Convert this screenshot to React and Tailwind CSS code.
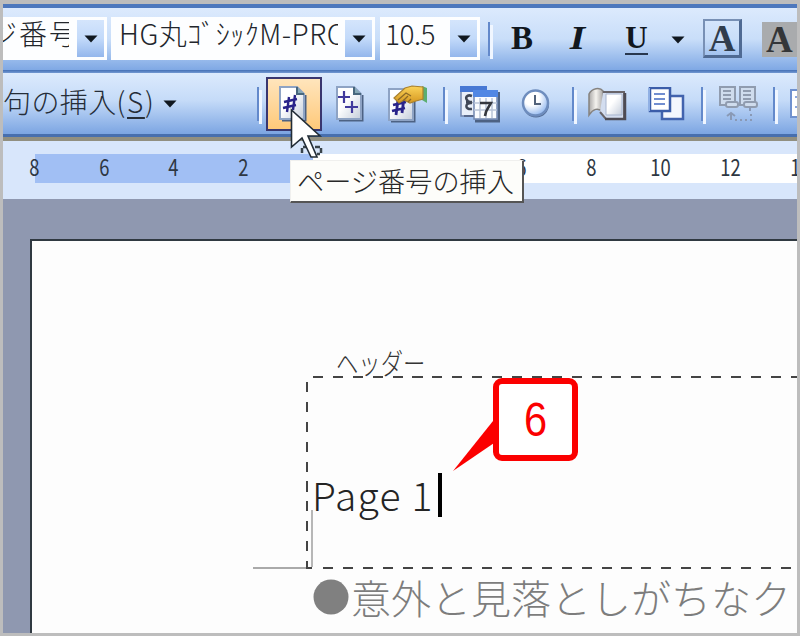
const fontStack = "font-['Noto_Sans_CJK_JP','Liberation_Sans',sans-serif]";

const rulerMarks = ["8", "6", "4", "2", "", "", "", "6", "8", "10", "12", "14"];

function Arrow() {
  return (
    <svg width="14" height="8" viewBox="0 0 14 8" className="shrink-0">
      <path d="M0.5 0.5H13.5L7 7.5Z" fill="#101820" />
    </svg>
  );
}

function Separator({ className }) {
  return (
    <div className={`flex h-[37px] w-[5px] shrink-0 ${className}`}>
      <div className="mb-[3px] w-[2px] bg-[#6389cb]" />
      <div className="mt-[3px] w-[3px] bg-[#f0f6ff]" />
    </div>
  );
}

function Combo({ text, className, textClass }) {
  return (
    <div className={`mt-[9px] flex h-[43px] shrink-0 items-start bg-[#fdfeff] ${className}`}>
      <div className={`h-[40px] flex-1 overflow-hidden whitespace-nowrap text-[28px] leading-[32px] text-[#22262c] ${textClass}`}>
        {text}
      </div>
      <div className="mt-[3px] mr-[3px] flex h-[37px] w-[27px] shrink-0 items-center justify-center bg-linear-to-b from-[#d4e5fc] via-[#c3dafa] to-[#94b7ec]">
        <Arrow />
      </div>
    </div>
  );
}

function Sheet() {
  return (
    <>
      <path d="M3 34H26V9" fill="none" stroke="#4d6283" strokeWidth="3" />
      <path d="M1 1H18L25 8V33H1Z" fill="url(#sheet)" stroke="#8ea3c4" strokeWidth="2" />
      <path d="M18 1V8H25" fill="#86a9b5" stroke="#48677d" strokeWidth="2" />
    </>
  );
}

function Defs() {
  return (
    <defs>
      <linearGradient id="sheet" x1="0" y1="0" x2="1" y2="1">
        <stop offset=".4" stopColor="#fff" />
        <stop offset="1" stopColor="#c4cddb" />
      </linearGradient>
      <linearGradient id="gold" x1="0" y1="0" x2="0" y2="1">
        <stop offset="0" stopColor="#fbd35a" />
        <stop offset="1" stopColor="#d69820" />
      </linearGradient>
      <radialGradient id="face" cx=".35" cy=".3" r=".75">
        <stop offset=".4" stopColor="#fff" />
        <stop offset="1" stopColor="#8fb6ef" />
      </radialGradient>
      <linearGradient id="leaf">
        <stop offset="0" stopColor="#aaa8a7" />
        <stop offset=".5" stopColor="#f5f3ef" />
        <stop offset="1" stopColor="#aaa8a7" />
      </linearGradient>
    </defs>
  );
}

const hashPath = "M10 11L8 26M16 9L14 24M5 16L18 13M4 22L17 19";

function PageNumberIcon() {
  return (
    <svg width="28" height="36" viewBox="0 0 28 36" className="-ml-[3px]">
      <Defs />
      <Sheet />
      <path d={hashPath} fill="none" stroke="#29238a" strokeWidth="2.4" />
    </svg>
  );
}

function PageCountIcon() {
  return (
    <svg width="28" height="36" viewBox="0 0 28 36" className="ml-[14px] shrink-0">
      <Sheet />
      <path d="M8 5V17M2 11H14M16 15V27M9 21H22" fill="none" stroke="#423b9d" strokeWidth="2.2" />
    </svg>
  );
}

function PageFormatIcon() {
  return (
    <svg width="41" height="38" viewBox="0 0 41 38" className="ml-6 shrink-0">
      <path d="M3 36H26V12" fill="none" stroke="#4d6283" strokeWidth="3" />
      <path d="M1 4H25V35H1Z" fill="url(#sheet)" stroke="#8ea3c4" strokeWidth="2" />
      <path d={hashPath} transform="translate(0 4)" fill="none" stroke="#29238a" strokeWidth="2.8" />
      <path d="M34 1L39 3V18L34 15Z" fill="#5bae71" />
      <path d="M6 13L17 3L24 1L35 2V14L28 16L22 18L16 15L11 18Z" fill="url(#gold)" stroke="#a9812f" strokeWidth="1.2" />
      <path d="M10 15L18 8L23 11M15 16L20 11M20 17L23 14" fill="none" stroke="#8b6826" strokeWidth="1.3" />
    </svg>
  );
}

function CalendarIcon() {
  return (
    <svg width="40" height="38" viewBox="0 0 40 38" className="ml-[12px] shrink-0">
      <path d="M1 2H26V31H1Z" fill="#e9eff9" stroke="#7187b0" strokeWidth="1.5" />
      <path d="M0 1H27V7H0Z" fill="#4778d4" />
      <path d="M12 11C7 9 4 13 8 16L12 18C5 17 4 25 12 24M6 17H12" fill="none" stroke="#3f4655" strokeWidth="2.5" />
      <path d="M4 31H15" stroke="#59698b" strokeWidth="2" />
      <path d="M15 36H39V7" fill="none" stroke="#4d6283" strokeWidth="3" />
      <path d="M14 6H37V34H14Z" fill="#fafcff" stroke="#7187b0" strokeWidth="1.5" />
      <path d="M13 5H38V12H13Z" fill="#5187e4" />
      <path d="M20 13V33M26 13V33M32 13V33M14 18H37M14 25H37" stroke="#b9c4d8" strokeWidth="1.5" />
      <path d="M20 18H31C29 22 26 24 25 31" fill="none" stroke="#34373e" strokeWidth="2.6" />
    </svg>
  );
}

function ClockIcon() {
  return (
    <svg width="30" height="32" viewBox="0 0 30 32" className="ml-[21px] shrink-0">
      <circle cx="15" cy="16.5" r="13" fill="#536a91" />
      <circle cx="14.5" cy="15" r="12.5" fill="url(#face)" stroke="#6e8dbe" strokeWidth="2.5" />
      <path d="M14 7V16H20" fill="none" stroke="#53637b" strokeWidth="2" />
    </svg>
  );
}

function BookIcon() {
  return (
    <svg width="39" height="34" viewBox="0 0 39 34" className="ml-[11px] shrink-0">
      <path d="M1 28V7C4 1 12 0 15 4V25C10 20 5 22 1 28Z" fill="url(#leaf)" stroke="#85827f" strokeWidth="1.5" />
      <path d="M15 5H36V32H18L12 25" fill="#d3ddef" stroke="#69656a" strokeWidth="2" />
      <path d="M18 7H34V28H18Z" fill="url(#sheet)" stroke="#a7b4ce" />
      <path d="M37 6V32H17" fill="none" stroke="#4d4b54" strokeWidth="2.5" />
    </svg>
  );
}

function CopyHeaderIcon() {
  return (
    <svg width="37" height="34" viewBox="0 0 37 34" className="ml-[21px] shrink-0">
      <path d="M14 9H35V32H14Z" fill="#f4f7fe" stroke="#4263ae" strokeWidth="2.5" />
      <path d="M2 1H22V24H2Z" fill="#fff" stroke="#3b5da9" strokeWidth="2.5" />
      <path d="M1 1V24" stroke="#90b0e4" strokeWidth="2" />
      <path d="M6 7H17M6 12H17M6 17H17" stroke="#718ed0" strokeWidth="2" />
    </svg>
  );
}

function LinkPreviousIcon() {
  return (
    <svg width="41" height="38" viewBox="0 0 41 38" className="ml-[12px] shrink-0">
      <g fill="#cfdced" stroke="#909caf" strokeWidth="2">
        <path d="M2 2H17V20H2ZM22 2H37V20H22Z" />
        <path d="M5 6H13M5 10H13M5 14H13M25 6H33M25 10H33M25 14H33" />
        <rect x="8" y="17" width="12" height="5" rx="2" />
        <rect x="26" y="17" width="13" height="5" rx="2" />
      </g>
      <path d="M9 31L13 28L17 31M13 28V35M32 22V26" fill="none" stroke="#8999b5" strokeWidth="2" />
      <path d="M17 35H33V28" fill="none" stroke="#8999b5" strokeWidth="2" strokeDasharray="2 3" />
    </svg>
  );
}

function FormattingToolbar() {
  return (
    <div className="flex h-[62px] shrink-0 overflow-hidden bg-linear-to-b from-[#dceafd] via-[#c9def9] via-50% to-[#7fa8e4]">
      <Combo text="ジ番号" className="w-[104px]" textClass="mr-[8px] -indent-[14px] tracking-[2px]" />
      <Combo text="HG丸ｺﾞｼｯｸM-PRO" className="ml-1 w-[264px]" textClass="mr-[7px] pl-[8px] tracking-[0.5px]" />
      <Combo text="10.5" className="ml-[5px] w-[100px]" textClass="pl-[5px] tracking-[-0.5px]" />
      <Separator className="mt-[14px] ml-[8px]" />
      <div className="mt-[11px] flex h-[39px] items-center font-['Liberation_Serif',serif] text-[33px] leading-none font-bold text-[#11171e]">
        <span className="ml-[18px] w-[26px]">B</span>
        <span className="ml-[35px] w-[22px] scale-x-120 italic">I</span>
        <span className="ml-[31px] h-[33px] w-[23px] border-b-2 border-[#28374e] pt-px text-center text-[31px] leading-[29px]">U</span>
        <span className="mt-[3px] ml-[23px]"><Arrow /></span>
        <span className="ml-[18px] flex h-[39px] w-[39px] items-center justify-center border-2 border-r-3 border-b-3 border-[#7890b5] border-r-[#4f6a93] border-b-[#4f6a93] text-[37px] text-[#303d4d]">A</span>
        <span className="mt-px ml-[20px] flex h-[35px] w-[40px] shrink-0 items-center bg-[#a9abad] pl-[4px] text-[37px] text-[#343638]">A</span>
      </div>
    </div>
  );
}

function HeaderToolbar() {
  return (
    <div className="flex h-[61px] shrink-0 items-center overflow-hidden bg-linear-to-b from-[#dceafd] via-[#c5dbf8] via-45% to-[#7ca5e2]">
      <div className="flex w-[254px] shrink-0 items-center whitespace-nowrap text-[28px] leading-[50px] text-[#252d38]">
        <span className="-mt-[5px] w-[160px] tracking-[0.4px]">
          句の挿入<span className="tracking-[1.6px]">(<u className="decoration-2 underline-offset-4">S</u>)</span>
        </span>
        <Arrow />
      </div>
      <Separator className="mt-[3px]" />
      <div className="ml-[4px] flex h-[54px] w-[56px] shrink-0 items-center justify-center border-2 border-[#39366f] bg-linear-to-b from-[#ffe5bc] to-[#ffc979]">
        <PageNumberIcon />
      </div>
      <PageCountIcon />
      <PageFormatIcon />
      <Separator className="mt-[3px] ml-[14px]" />
      <CalendarIcon />
      <ClockIcon />
      <Separator className="mt-[3px] ml-[21px]" />
      <BookIcon />
      <CopyHeaderIcon />
      <Separator className="mt-[3px] ml-[16px]" />
      <LinkPreviousIcon />
      <Separator className="mt-[3px] ml-[14px]" />
      <div className="ml-[12px] h-[29px] w-[20px] shrink-0 border-2 border-[#6f91cf] bg-white pt-[5px] pl-[3px]">
        <div className="h-[12px] border-y-2 border-[#8ca7df]" />
      </div>
    </div>
  );
}

function Ruler() {
  return (
    <div className="h-[58px] shrink-0 overflow-hidden bg-[#d8e6fb] pt-[13px]">
      <div className="flex h-[29px] bg-[linear-gradient(to_right,#d8e6fb_32px,#a1bff4_32px,#a1bff4_310px,#fff_310px)]">
        {rulerMarks.map((mark, i) => (
          <span
            key={i}
            className="w-[69.6px] shrink-0 -translate-x-[3.4px] scale-x-80 text-center text-[23px] leading-[25px] font-normal text-[#2e3742]"
          >
            {mark}
          </span>
        ))}
      </div>
    </div>
  );
}

function HeaderArea() {
  return (
    <div className="flex flex-col">
      <div className="mt-[104px] ml-[304px] h-[31px] text-[29px] leading-[34px] text-[#353535]">
        <span className="inline-block origin-left scale-x-77">ヘッダー</span>
      </div>
      <div className="ml-[281px] h-[2px] bg-[repeating-linear-gradient(to_right,#444_0_10px,transparent_10px_19.9px)]" />
      <div className="flex h-[189px]">
        <div className="mt-[4px] ml-[274px] w-[2px] shrink-0 bg-[repeating-linear-gradient(to_bottom,#444_0_10px,transparent_10px_19.9px)]" />
        <div className="mt-[132px] ml-[3px] w-[2px] shrink-0 bg-[#b7b7b7]" />
        <div className="mt-[94px] flex h-[46px] items-start text-[39px] leading-[44px] text-[#242424]">
          <span className="-ml-px w-[126px] tracking-[1.2px] whitespace-pre">Page 1</span>
          <div className="mt-px h-[44px] w-[4px] bg-black" />
        </div>
      </div>
      <div className="flex h-[2px]">
        <div className="ml-[221px] w-[53px] bg-[#aaa]" />
        <div className="w-[6px] bg-[#444]" />
        <div className="ml-[11px] flex-1 bg-[repeating-linear-gradient(to_right,#444_0_10px,transparent_10px_19.9px)]" />
      </div>
      <div className="ml-[280px] flex h-[60px] text-[40px] leading-[57px] whitespace-nowrap text-[#7d7d7d]">
        <svg width="36" height="36" viewBox="0 0 36 36" className="mt-[10px] mr-[2px] ml-px shrink-0">
          <circle cx="18" cy="18" r="17.5" fill="#808080" />
        </svg>
        意外と見落としがちなクッ
      </div>
    </div>
  );
}

function Tooltip() {
  return (
    <div className="absolute top-[160px] left-[290px] h-[43px] w-[234px] border border-r-2 border-b-2 border-[#f0f0ee] border-r-[#555] border-b-[#555] bg-[#fdfdfa] pl-[6px] text-[27.2px] leading-[38px] whitespace-nowrap text-[#282828]">
      ページ番号の挿入
    </div>
  );
}

function Cursor() {
  return (
    <svg width="36" height="52" viewBox="0 0 36 52" className="absolute top-[108px] left-[290px]">
      <path d="M18 39H12V46M25 39H31V46H27" fill="none" stroke="#39434a" strokeWidth="2.5" strokeDasharray="5 2" />
      <path d="M1.5 2V39L12 30L21 49H27L18 28H30Z" fill="#fff" stroke="#222c36" strokeWidth="1.6" />
    </svg>
  );
}

function Callout() {
  return (
    <div className="absolute top-[378px] left-[493px] flex h-[83px] w-[85px] items-center justify-center rounded-[9px] border-6 border-[#fb0000] bg-white font-['Liberation_Sans',sans-serif] text-[49px] leading-none text-[#fb0000]">
      <svg width="44" height="60" viewBox="0 0 44 60" className="absolute top-[28px] left-[-46px]">
        <path d="M44 4L0 59L44 29Z" fill="#fb0000" />
      </svg>
      <span className="scale-x-85">6</span>
    </div>
  );
}

export default function App() {
  return (
    <div className={`relative flex h-[636px] w-[800px] flex-col overflow-hidden border-t-4 border-r-3 border-b-3 border-l-3 border-[#bdbdbd] font-light ${fontStack}`}>
      <div className="h-[4px] shrink-0 bg-[#4d78bd]" />
      <FormattingToolbar />
      <div className="h-[3px] shrink-0 bg-linear-to-b from-[#446fb5] to-[#7399d2]" />
      <HeaderToolbar />
      <div className="h-[3px] shrink-0 bg-[#476fae]" />
      <div className="h-[4px] shrink-0 bg-[#918f80]" />
      <Ruler />
      <div className="flex-1 overflow-hidden bg-[#8f98b0] pt-[40px] pl-[27px]">
        <div className="h-full border-t-2 border-l-2 border-[#303941] bg-[#fdfdfd]">
          <HeaderArea />
        </div>
      </div>
      <div className="absolute -top-1 -left-[3px]">
        <Tooltip />
        <Cursor />
        <Callout />
      </div>
    </div>
  );
}
